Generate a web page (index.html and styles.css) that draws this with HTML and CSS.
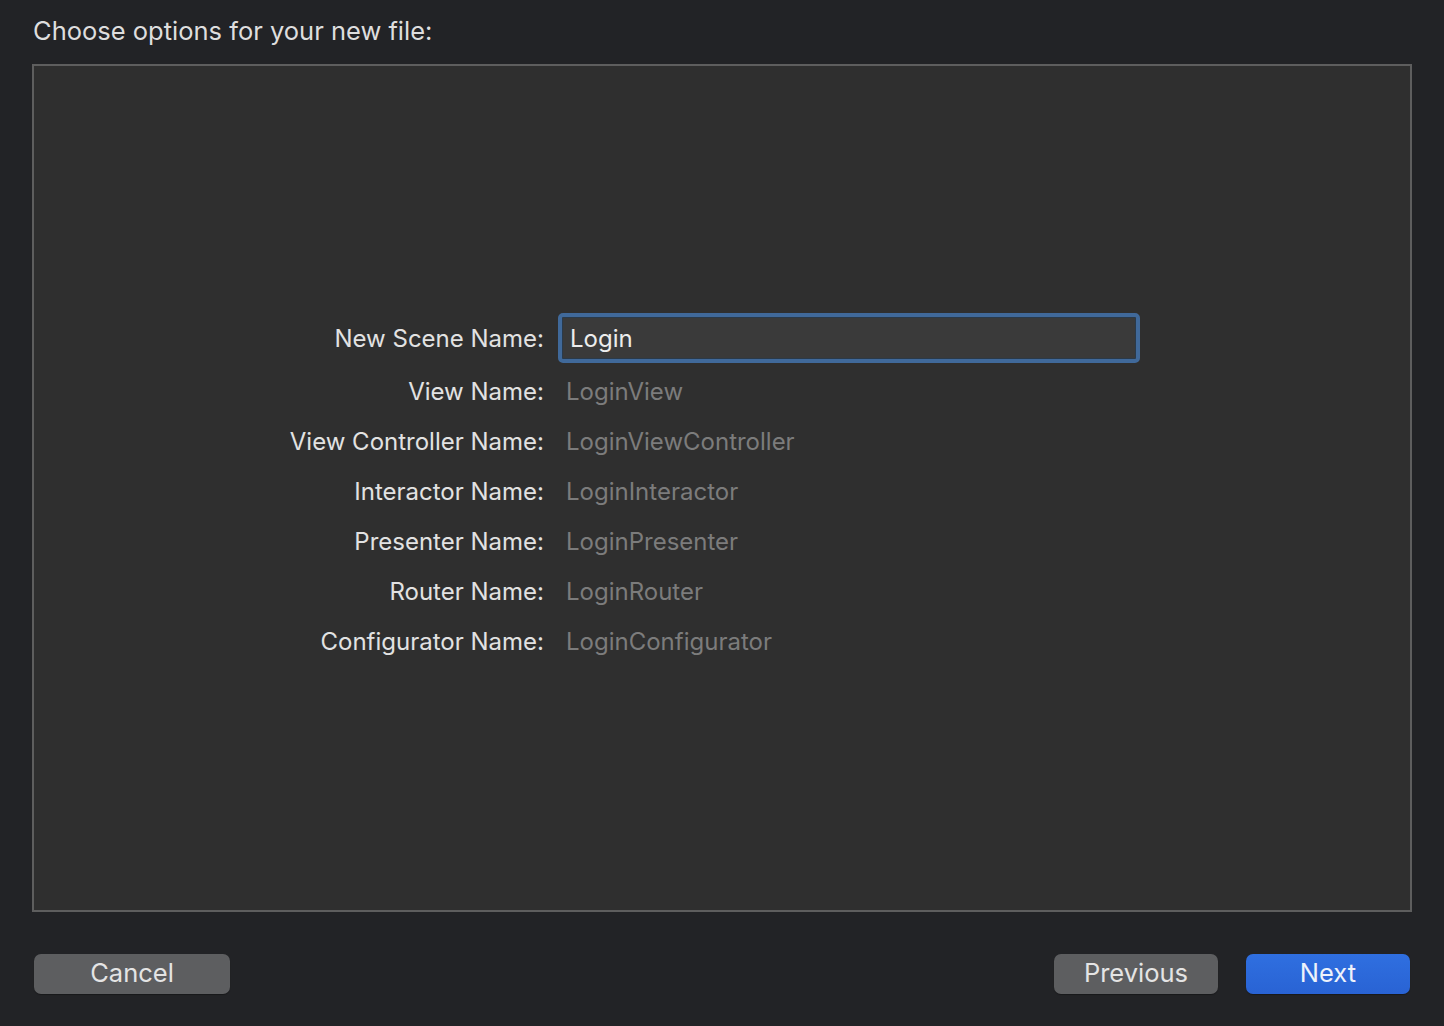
FILE: index.html
```html
<!DOCTYPE html>
<html>
<head>
<meta charset="utf-8">
<link rel="stylesheet" href="styles.css">
</head>
<body>
<div class="window">
  <h1 class="title">Choose options for your new file:</h1>
  <div class="panel">
    <div class="form">
      <div class="label first">New Scene Name:</div>
      <div class="field first"><div class="input">Login</div></div>
      <div class="label">View Name:</div>
      <div class="value">LoginView</div>
      <div class="label">View Controller Name:</div>
      <div class="value">LoginViewController</div>
      <div class="label">Interactor Name:</div>
      <div class="value">LoginInteractor</div>
      <div class="label">Presenter Name:</div>
      <div class="value">LoginPresenter</div>
      <div class="label">Router Name:</div>
      <div class="value">LoginRouter</div>
      <div class="label">Configurator Name:</div>
      <div class="value">LoginConfigurator</div>
    </div>
  </div>
  <div class="buttons">
    <button class="btn cancel">Cancel</button>
    <div class="spacer"></div>
    <button class="btn">Previous</button>
    <button class="btn primary">Next</button>
  </div>
</div>
</body>
</html>
```

FILE: styles.css
```css
html, body {
  margin: 0;
  padding: 0;
  background: #222326;
  font-family: Inter, "Liberation Sans", sans-serif;
}
.window {
  width: 1444px;
  height: 1026px;
  box-sizing: border-box;
  padding: 16px 34px 0 32px;
}
.title {
  margin: 0 0 0 1px;
  font-size: 25.5px;
  font-weight: 400;
  line-height: 30px;
  color: #dedede;
  height: 48px;
}
.panel {
  box-sizing: border-box;
  width: 1380px;
  height: 848px;
  border: 2px solid #5e5e5e;
  background: #2f2f2f;
  padding-top: 247px;
}
.form {
  display: grid;
  grid-template-columns: 510px 582px;
  column-gap: 14px;
  grid-template-rows: 53px repeat(6, 50px);
  align-items: center;
  font-size: 24px;
}
.label {
  text-align: right;
  color: #e2e2e2;
}
.label.first, .field.first {
  align-self: start;
  height: 50px;
  display: flex;
  align-items: center;
}
.label.first { justify-content: flex-end; }
.value {
  color: #7c7c7c;
  padding-left: 8px;
}
.input {
  box-sizing: border-box;
  width: 582px;
  height: 50px;
  border: 4px solid #40699a;
  border-radius: 5px;
  background: #3a3a3a;
  box-shadow: inset 0 0 0 1px #2a3a4a;
  color: #ececec;
  padding-left: 8px;
  display: flex;
  align-items: center;
}
.buttons {
  display: flex;
  margin-top: 42px;
  padding-left: 2px;
  gap: 28px;
}
.spacer { flex: 1; }
.btn {
  width: 164px;
  height: 40px;
  border: none;
  border-radius: 7px;
  background: #5d5e60;
  color: #e4e4e4;
  font-family: Inter, "Liberation Sans", sans-serif;
  font-size: 25.5px;
  padding: 0 0 3px 0;
  box-shadow: 0 1px 1px rgba(0,0,0,0.3);
}
.btn.cancel { width: 196px; }
.btn.primary {
  background: linear-gradient(#2f6fe0, #2963d4);
  color: #eef2fb;
}
```
